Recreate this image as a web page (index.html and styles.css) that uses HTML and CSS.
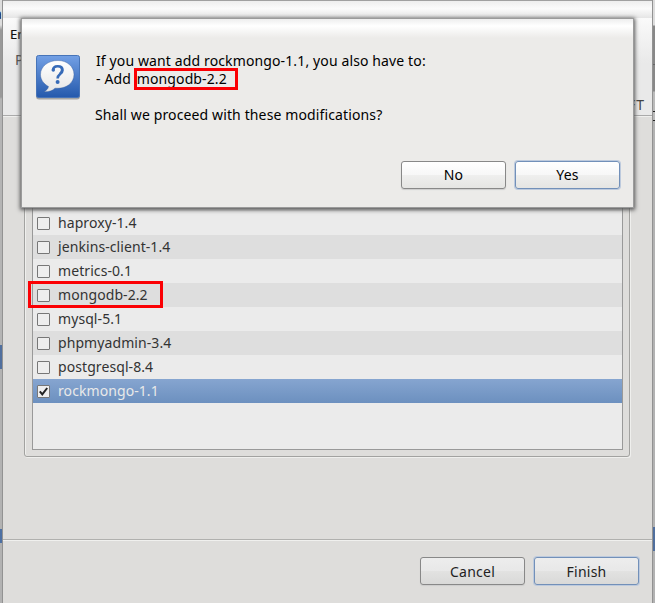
FILE: index.html
```html
<!DOCTYPE html>
<html lang="en">
<head>
<meta charset="utf-8">
<title>Cartridges</title>
<link rel="stylesheet" href="styles.css">
</head>
<body>
<div class="desktop">
<div class="edge left"><span class="edge-letter">a</span></div>
<main class="wizard">
  <div class="titlebar"></div>
  <header class="header"><h1>En</h1><p>P</p><span class="brand">FT</span></header>
  <section class="content">
    <div class="group">
      <ul class="list">
        <li></li>
        <li><i class="check"></i><span>haproxy-1.4</span></li>
        <li><i class="check"></i><span>jenkins-client-1.4</span></li>
        <li><i class="check"></i><span>metrics-0.1</span></li>
        <li><i class="check"></i><span>mongodb-2.2</span><b class="mark mark-row"></b></li>
        <li><i class="check"></i><span>mysql-5.1</span></li>
        <li><i class="check"></i><span>phpmyadmin-3.4</span></li>
        <li><i class="check"></i><span>postgresql-8.4</span></li>
        <li class="selected"><i class="check"><svg viewBox="0 0 13 13"><path d="M2.800 6.300 5.300 9.300 10.200 3" fill="none" stroke="#222" stroke-width="2"/></svg></i><span>rockmongo-1.1</span></li>
      </ul>
    </div>
  </section>
  <footer class="footer"><button class="btn">Cancel</button><button class="btn primary">Finish</button></footer>
</main>
<div class="edge right"></div>
<div class="dialog">
  <div class="message">
    <svg class="icon" viewBox="0 0 46 46">
      <defs><linearGradient id="blue" x2="0" y2="1"><stop stop-color="#73a0e5"/><stop offset="1" stop-color="#2459ac"/></linearGradient>
      <linearGradient id="white" x2="0" y2="1"><stop stop-color="#fff"/><stop offset="1" stop-color="#e6e6e6"/></linearGradient></defs>
      <rect x="1" y="2" width="44" height="43.5" rx="3" fill="#777" opacity=".6"/>
      <rect x="1.500" y="1.500" width="43" height="42" rx="2" fill="url(#blue)" stroke="#4774b8"/>
      <path d="M23 6.500C13 6.500 5.500 12.500 5.500 20.500c0 5.500 3.500 9.500 8 12-.5 2.500-2 4-4.500 5.200 5 .3 8.500-1 11-3.500 11 1 19-5 19-13.700C39 12.500 32 6.500 23 6.500Z" fill="url(#white)" stroke="#315a9c" stroke-opacity=".4"/>
      <path d="M18 16.500c0-3.300 2-4.300 4.700-4.300 3.200 0 4.900 1.600 4.900 4 0 3.600-5 3.600-5 8.300" fill="none" stroke="#376bb8" stroke-width="2.500"/><path d="M25.500 13c2.200 1.600 1.500 4.700-.5 6.500" fill="none" stroke="#376bb8" stroke-width="2"/><circle cx="18.300" cy="16" r="1.700" fill="#376bb8"/><circle cx="22.600" cy="28" r="2" fill="#376bb8"/>
    </svg>
    <div class="copy">
      <p class="line one">If you want add rockmongo-1.1, you also have to:</p>
      <p class="line two">- Add <span>mongodb-2.2<b class="mark mark-text"></b></span></p>
      <p class="line three">Shall we proceed with these modifications?</p>
    </div>
  </div>
  <div class="actions"><button class="btn">No</button><button class="btn primary">Yes</button></div>
</div>
</div>
</body>
</html>
```
FILE: styles.css
```css
* { box-sizing: border-box; }
body { margin: 0; overflow: hidden; font: 14px/18px "Noto Sans", sans-serif; color: #333; }
h1, p, ul { margin: 0; padding: 0; font: inherit; }
.desktop { position: relative; display: flex; width: 655px; height: 603px; background: #dedddb; }
.edge { overflow: hidden; }
.left { width: 3px; border-right: 1px solid #929292; background: linear-gradient(#ddd 0 25px, #999 30px 97px, #b4b4b4 99px 345px, #506f9e 345px 369px, #b2b2b2 369px 529px, #4d70a3 529px 543px, #b2b2b2 543px); }
.edge-letter { display: block; margin: 5px 0 0 -6px; color: #111; }
.right { width: 3px; border-left: 1px solid #929292; background: linear-gradient(#ddd 0 25px, #888 26px 64px, #666 64px 65px, #888 65px 91px, #bbb 92px 111px, #222 111px 112px, #bbb 112px 120px, #222 120px 121px, #b2b2b2 121px 527px, #506f9e 527px 551px, #b2b2b2 551px); }
.wizard { display: flex; flex-direction: column; width: 649px; border-top: 1px solid #a0a0a0; }
.titlebar { height: 17px; background: linear-gradient(#eee, #fbfbfb 45%, #e5e5e5); }
.header { position: relative; height: 98px; padding: 7px 7px; border-bottom: 1px solid #aaa; background: linear-gradient(#fafafa, #e9e9e9 45px); }
.header h1 { font-size: 13px; color: #111; -webkit-text-stroke: .2px #111; }
.header p { margin: 8px 0 0 5px; color: #555; }
.brand { position: absolute; right: 7px; bottom: 1px; color: #444; letter-spacing: 1px; }
.content { height: 423px; padding: 39px 22px 0 21px; border-top: 1px solid #efefed; }
.group { height: 301px; padding: 30px 6px 6px 7px; border: 1px solid #a2a2a0; border-radius: 3px; box-shadow: 1px 1px #efefed, inset 1px 0 #efefed; }
.list { height: 263px; list-style: none; border: 1px solid #999; background: #ebebeb; }
.list li { position: relative; display: flex; align-items: center; height: 24px; padding-left: 4px; }
.list li:nth-child(odd) { background: #dedede; }
.list li:first-child { height: 23px; }
.list li.selected { color: #e9e9e9; background: linear-gradient(#86a5d0, #6c90bf); }
.list li > span { margin-left: 8px; white-space: nowrap; letter-spacing: .08px; }
.check { width: 13px; height: 13px; border: 1px solid #777; border-radius: 1px; background: #eee; }
.check svg { display: block; margin: -1px; width: 13px; height: 13px; }
.mark { position: absolute; border: 3px solid #fb0004; pointer-events: none; }
.mark-row { left: -5px; top: -2px; width: 135px; height: 27px; }
.footer { display: flex; justify-content: flex-end; gap: 9px; height: 64px; padding: 17px 13px 0; border-top: 1px solid #b0b0ae; box-shadow: inset 0 1px #f0f0ee; }
.btn { width: 105px; height: 28px; padding: 0; border: 1px solid #888; border-radius: 3px; font: inherit; letter-spacing: .25px; color: #222; background: linear-gradient(#ededed, #e8e8e8 50%, #e2e2e1 51%, #d9d9d8); box-shadow: 0 1px 1px #ccc; }
.footer .btn { padding-top: 1px; }
.btn.primary { border-color: #7290b9; box-shadow: 0 0 0 1px #bdcadd; }
.dialog { position: absolute; left: 21px; top: 18px; width: 613px; height: 190px; padding: 35px 13px 18px 13px; color: #000; background: linear-gradient(#eee, #fff 7px, #ecebe9 19px); border: 1px solid #9b9b9b; box-shadow: 0 1px 4px 1px #555; }
.message { display: flex; height: 107px; }
.icon { width: 46px; height: 46px; }
.copy { margin-left: 15px; margin-top: -2px; }
.line { white-space: nowrap; height: 18px; letter-spacing: .125px; }
.three { margin-top: 18px; margin-left: -1px; }
.line span { position: relative; margin-left: 2px; }
.mark-text { left: -3px; top: -1px; width: 104px; height: 22px; }
.actions { display: flex; justify-content: flex-end; gap: 9px; }
.actions .btn { color: #000; background: linear-gradient(#fff, #f7f7f7 50%, #efefee 51%, #e5e5e3); }
```
